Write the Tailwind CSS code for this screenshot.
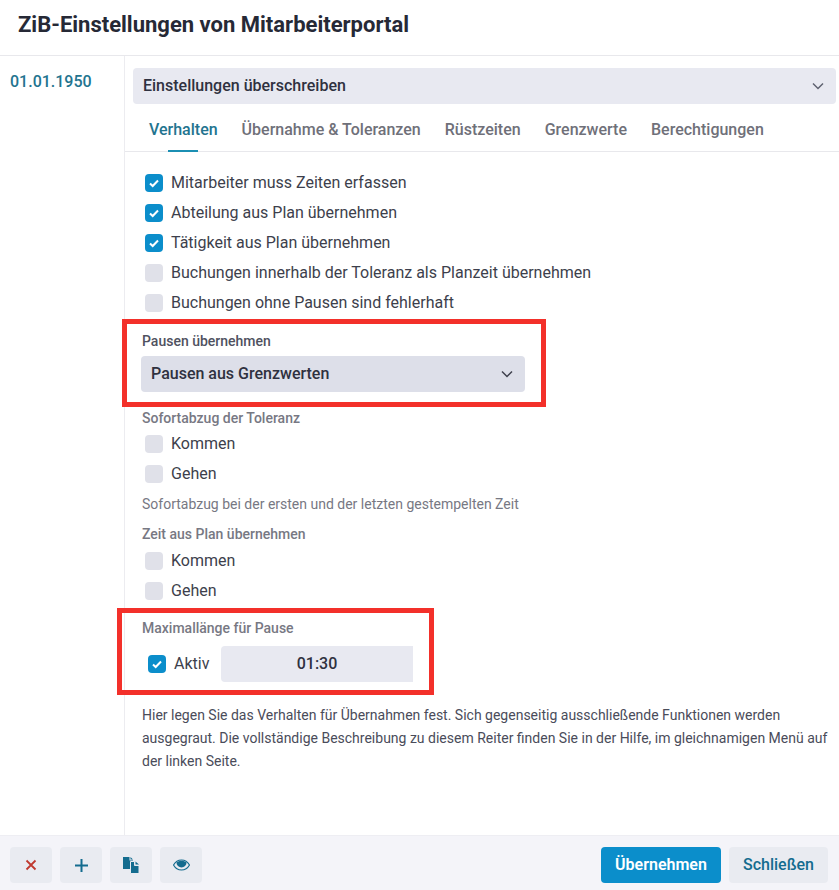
<!DOCTYPE html>
<html lang="de">
<head>
  <meta charset="UTF-8" />
  <title>ZiB-Einstellungen</title>
  <script src="https://cdn.jsdelivr.net/npm/@tailwindcss/browser@4"></script>
</head>
<body class="bg-white font-['Roboto',sans-serif] text-[#2b2d3c]">
  <div class="relative flex h-[890px] w-[839px] flex-col overflow-hidden">
    <header class="flex h-[56px] shrink-0 items-center border-b border-[#e8e8ec] pb-[6px] pl-[18px]">
      <h1 class="text-[22px] font-bold text-[#262936]">ZiB-Einstellungen von Mitarbeiterportal</h1>
    </header>

    <div class="flex min-h-0 flex-1">
      <aside class="w-[125px] shrink-0 border-r border-[#ececf0] pt-[16px] pl-[10px] text-[16px] font-medium leading-[20px] text-[#23748f]">01.01.1950</aside>

      <main class="min-w-0 flex-1">
        <div class="pt-[12px] pr-[3px] pl-[8px]">
          <div class="flex h-[36px] items-center justify-between rounded-[4px] bg-[#e8e9f1] pr-[11px] pl-[10px] text-[16px] font-medium text-[#2f3140]">
            <span>Einstellungen überschreiben</span>
            <svg class="h-[14px] w-[14px] text-[#5f6270]" viewBox="0 0 14 14" fill="none" stroke="currentColor" stroke-width="1.5"><path d="M2 4.5l5 5 5-5" /></svg>
          </div>
        </div>

        <nav class="flex h-[48px] gap-[24px] border-b border-[#e8e8ec] pt-[4px] pl-[24px] text-[16px] font-medium text-[#6f7079]">
          <a class="relative flex items-center text-[#23748f]">Verhalten<span class="absolute -bottom-px left-[19px] h-[2px] w-[30px] bg-[#1b8fb3]"></span></a>
          <a class="flex items-center">Übernahme &amp; Toleranzen</a>
          <a class="flex items-center">Rüstzeiten</a>
          <a class="flex items-center">Grenzwerte</a>
          <a class="flex items-center">Berechtigungen</a>
        </nav>

        <div class="pt-[16px] pl-[17px] text-[16px] text-[#3d3f4c]">
          <label class="flex h-[30px] items-center gap-[8px] pl-[3px]">
            <span class="flex h-[18px] w-[18px] items-center justify-center rounded-[4px] bg-[#0b8ecb]"><svg class="h-[12px] w-[12px]" viewBox="0 0 12 12" fill="none" stroke="white" stroke-width="2"><path d="M2 6.5l2.7 2.500L10 3.500" /></svg></span>
            Mitarbeiter muss Zeiten erfassen
          </label>
          <label class="flex h-[30px] items-center gap-[8px] pl-[3px]">
            <span class="flex h-[18px] w-[18px] items-center justify-center rounded-[4px] bg-[#0b8ecb]"><svg class="h-[12px] w-[12px]" viewBox="0 0 12 12" fill="none" stroke="white" stroke-width="2"><path d="M2 6.5l2.7 2.500L10 3.500" /></svg></span>
            Abteilung aus Plan übernehmen
          </label>
          <label class="flex h-[30px] items-center gap-[8px] pl-[3px]">
            <span class="flex h-[18px] w-[18px] items-center justify-center rounded-[4px] bg-[#0b8ecb]"><svg class="h-[12px] w-[12px]" viewBox="0 0 12 12" fill="none" stroke="white" stroke-width="2"><path d="M2 6.5l2.7 2.500L10 3.500" /></svg></span>
            Tätigkeit aus Plan übernehmen
          </label>
          <label class="flex h-[30px] items-center gap-[8px] pl-[3px]">
            <span class="h-[18px] w-[18px] rounded-[4px] bg-[#e0e1e9]"></span>
            Buchungen innerhalb der Toleranz als Planzeit übernehmen
          </label>
          <label class="flex h-[30px] items-center gap-[8px] pl-[3px]">
            <span class="h-[18px] w-[18px] rounded-[4px] bg-[#e0e1e9]"></span>
            Buchungen ohne Pausen sind fehlerhaft
          </label>

          <div class="mt-[14px] text-[14px] leading-[18px] font-medium text-[#4f5160]">Pausen übernehmen</div>
          <div class="mt-[6px] flex h-[36px] w-[384px] -translate-x-px items-center justify-between rounded-[4px] bg-[#dddfe9] pr-[11px] pl-[10px] text-[16px] font-medium text-[#2f3140]">
            <span>Pausen aus Grenzwerten</span>
            <svg class="h-[14px] w-[14px] text-[#3e404d]" viewBox="0 0 14 14" fill="none" stroke="currentColor" stroke-width="1.5"><path d="M2 4.5l5 5 5-5" /></svg>
          </div>

          <div class="mt-[17px] text-[14px] leading-[18px] font-medium text-[#777883]">Sofortabzug der Toleranz</div>
          <label class="mt-[2px] flex h-[30px] items-center gap-[8px] pl-[3px]">
            <span class="h-[18px] w-[18px] rounded-[4px] bg-[#e0e1e9]"></span>
            Kommen
          </label>
          <label class="flex h-[30px] items-center gap-[8px] pl-[3px]">
            <span class="h-[18px] w-[18px] rounded-[4px] bg-[#e0e1e9]"></span>
            Gehen
          </label>
          <p class="mt-[6px] text-[14px] leading-[18px] text-[#777883]">Sofortabzug bei der ersten und der letzten gestempelten Zeit</p>

          <div class="mt-[12px] text-[14px] leading-[18px] font-medium text-[#777883]">Zeit aus Plan übernehmen</div>
          <label class="mt-[3px] flex h-[30px] items-center gap-[8px] pl-[3px]">
            <span class="h-[18px] w-[18px] rounded-[4px] bg-[#e0e1e9]"></span>
            Kommen
          </label>
          <label class="flex h-[30px] items-center gap-[8px] pl-[3px]">
            <span class="h-[18px] w-[18px] rounded-[4px] bg-[#e0e1e9]"></span>
            Gehen
          </label>

          <div class="mt-[13px] text-[14px] leading-[18px] font-medium text-[#777883]">Maximallänge für Pause</div>
          <div class="mt-[9px] flex h-[36px] items-center pl-[6px]">
            <span class="flex h-[18px] w-[18px] items-center justify-center rounded-[4px] bg-[#0b8ecb]"><svg class="h-[12px] w-[12px]" viewBox="0 0 12 12" fill="none" stroke="white" stroke-width="2"><path d="M2 6.5l2.7 2.500L10 3.500" /></svg></span>
            <span class="ml-[8px] w-[47px]">Aktiv</span>
            <div class="flex h-[36px] w-[192px] items-center justify-center rounded-l-[4px] bg-[#e8e9f1] font-medium text-[#2f3140]">01:30</div>
          </div>

          <p class="mt-[22px] w-[690px] text-[14px] leading-[23px] text-[#4a4c5a]">Hier legen Sie das Verhalten für Übernahmen fest. Sich gegenseitig ausschließende Funktionen werden ausgegraut. Die vollständige Beschreibung zu diesem Reiter finden Sie in der Hilfe, im gleichnamigen Menü auf der linken Seite.</p>
        </div>
      </main>
    </div>

    <footer class="flex h-[55px] shrink-0 items-center justify-between border-t border-[#eeeef3] bg-[#f4f4f9] pt-[4px] pr-[11px] pl-[10px]">
      <div class="flex gap-[8px]">
        <button class="flex h-[36px] w-[42px] items-center justify-center rounded-[4px] bg-[#e9ebf1]">
          <svg class="h-[12px] w-[12px]" viewBox="0 0 12 12" stroke="#c0392f" stroke-width="1.8"><path d="M1.5 1.5l9 9M10.5 1.5l-9 9" /></svg>
        </button>
        <button class="flex h-[36px] w-[42px] items-center justify-center rounded-[4px] bg-[#e9ebf1]">
          <svg class="h-[15px] w-[15px]" viewBox="0 0 15 15" stroke="#146c8f" stroke-width="2"><path d="M7.5 1v13M1 7.5h13" /></svg>
        </button>
        <button class="flex h-[36px] w-[42px] items-center justify-center rounded-[4px] bg-[#e9ebf1]">
          <svg class="h-[17px] w-[17px]" viewBox="0 0 17 17" fill="#146c8f"><path d="M0 0h6.500v3.500H10V12H0zM7.500 0L10 2.500H7.500z" /><path d="M7.500 4.500h4v4H16v8H7.500z" stroke="#e9ebf1" /><path d="M12.500 4.500L16 7.500h-3.500z" /></svg>
        </button>
        <button class="flex h-[36px] w-[42px] items-center justify-center rounded-[4px] bg-[#e9ebf1]">
          <svg class="h-[12px] w-[17px]" viewBox="0 0 17 12"><path d="M.5 6C2.500 2.500 5.300 1 8.500 1s6 1.500 8 5c-2 3.500-4.800 5-8 5s-6-1.500-8-5z" fill="none" stroke="#146c8f" stroke-width="1.200" /><path d="M3.500 3.500C5 2.300 6.700 1.700 8.500 1.700s3.500.6 5 1.800a5 5 0 0 1-10 0z" fill="#146c8f" /></svg>
        </button>
      </div>
      <div class="flex gap-[8px] text-[16px] font-medium">
        <button class="h-[36px] w-[120px] rounded-[4px] bg-[#0b8ecb] font-semibold text-white">Übernehmen</button>
        <button class="h-[36px] w-[99px] rounded-[4px] bg-[#e9ebf1] text-[#146c8f]">Schließen</button>
      </div>
    </footer>

    <!-- rote Markierungen liegen über dem Formular -->
    <div class="pointer-events-none absolute top-[319px] left-[122px] h-[88px] w-[424px] border-[5px] border-[#f3302a]"></div>
    <div class="pointer-events-none absolute top-[608px] left-[117px] h-[87px] w-[317px] border-[5px] border-[#f3302a]"></div>
  </div>
</body>
</html>
